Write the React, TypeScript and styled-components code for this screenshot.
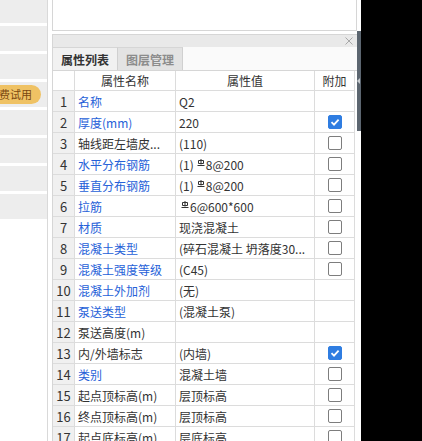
import * as React from 'react'
import styled, { createGlobalStyle } from 'styled-components'

const GlobalStyle = createGlobalStyle`
    html, body {
        margin: 0;
        padding: 0;
        background: #fff;
    }
    body {
        font-family: "Noto Sans CJK SC", "Noto Sans", sans-serif;
        font-size: 12px;
        color: #333;
    }
`

const RebarWrap = styled('span')<{ $indent?: boolean }>`
    display: inline-flex;
    align-self: flex-start;
    margin: 5px 1px 0 ${p => (p.$indent ? '2px' : '3px')};
`

const Mark = styled('svg')`
    display: block;
`

type Row = {
    name: string
    blue: boolean
    value: string
    rebar?: [string, string, boolean?]
    check: boolean | null
}

// 钢筋等级符号
const RebarMark = () => (
    <Mark width="8" height="7" viewBox="0 0 8 7">
        <path d="M4 0 V5.5 M1.5 1.5 H6.5 V4.5 H1.5 Z M0.5 6.5 H7.5" fill="none" stroke="#333" strokeWidth="1" />
    </Mark>
)

const rows: Row[] = [
    { name: '名称', blue: true, value: 'Q2', check: null },
    { name: '厚度(mm)', blue: true, value: '220', check: true },
    { name: '轴线距左墙皮...', blue: false, value: '(110)', check: false },
    { name: '水平分布钢筋', blue: true, value: '', rebar: ['(1)', '8@200'], check: false },
    { name: '垂直分布钢筋', blue: true, value: '', rebar: ['(1)', '8@200'], check: false },
    { name: '拉筋', blue: true, value: '', rebar: ['', '6@600*600', true], check: false },
    { name: '材质', blue: true, value: '现浇混凝土', check: false },
    { name: '混凝土类型', blue: true, value: '(碎石混凝土 坍落度30...', check: false },
    { name: '混凝土强度等级', blue: true, value: '(C45)', check: false },
    { name: '混凝土外加剂', blue: true, value: '(无)', check: null },
    { name: '泵送类型', blue: true, value: '(混凝土泵)', check: null },
    { name: '泵送高度(m)', blue: false, value: '', check: null },
    { name: '内/外墙标志', blue: false, value: '(内墙)', check: true },
    { name: '类别', blue: true, value: '混凝土墙', check: false },
    { name: '起点顶标高(m)', blue: false, value: '层顶标高', check: false },
    { name: '终点顶标高(m)', blue: false, value: '层顶标高', check: false },
    { name: '起点底标高(m)', blue: false, value: '层底标高', check: false },
]

const navBlocks = [0, 1, 2, 3, 4, 5, 6, 7]

export default function App() {
    return (
        <Page>
            <GlobalStyle />
            <LeftNav>
                {navBlocks.map(i => (
                    <NavBlock key={i}>
                        {i === 3 && <Badge>免费试用</Badge>}
                    </NavBlock>
                ))}
            </LeftNav>
            <Main>
                <TopPanel />
                <PropPanel>
                    <PanelHeader>
                        <svg width="8" height="8" viewBox="0 0 8 8">
                            <path d="M0.5 0.5 L7.5 7.5 M7.5 0.5 L0.5 7.5" stroke="#a8a8a8" strokeWidth="1" />
                        </svg>
                    </PanelHeader>
                    <TabBar>
                        <Tab $active>属性列表</Tab>
                        <Tab>图层管理</Tab>
                    </TabBar>
                    <Table>
                        <HeadCell />
                        <HeadCell>属性名称</HeadCell>
                        <HeadCell>属性值</HeadCell>
                        <HeadCell>附加</HeadCell>
                        {rows.map((r, i) => (
                            <React.Fragment key={i}>
                                <NumCell>{i + 1}</NumCell>
                                <NameCell $blue={r.blue}>{r.name}</NameCell>
                                <ValueCell>
                                    {r.rebar ? (
                                        <>
                                            {r.rebar[0]}
                                            <RebarWrap $indent={r.rebar[2]}><RebarMark /></RebarWrap>
                                            {r.rebar[1]}
                                        </>
                                    ) : r.value}
                                </ValueCell>
                                <AddCell>
                                    {r.check !== null && (
                                        <Check $checked={r.check}>
                                            {r.check && (
                                                <svg width="10" height="10" viewBox="0 0 10 10">
                                                    <path d="M1.5 5.2 L4 7.6 L8.6 2.6" fill="none" stroke="#fff" strokeWidth="1.8" />
                                                </svg>
                                            )}
                                        </Check>
                                    )}
                                </AddCell>
                            </React.Fragment>
                        ))}
                    </Table>
                </PropPanel>
            </Main>
            <ScrollColumn>
                <Thumb>
                    <Arrow />
                </Thumb>
            </ScrollColumn>
            <Backdrop />
        </Page>
    )
}

const Page = styled('div')`
    display: flex;
    width: 422px;
    height: 441px;
    overflow: hidden;
    background: #fff;
`

const LeftNav = styled('div')`
    width: 47px;
    flex: none;
    margin-right: 4px;
    border-right: 1px solid #d9d9d9;
    display: flex;
    flex-direction: column;
    gap: 3px;
    margin-top: -2px;
    overflow: hidden;
`

const NavBlock = styled('div')`
    height: 25px;
    flex: none;
    background: #ededed;
    display: flex;
    align-items: center;
`

const Badge = styled('div')`
    margin-left: -21px;
    height: 19px;
    line-height: 19px;
    padding: 0 9px 0 9px;
    border-radius: 10px;
    background: #efc264;
    color: #7a4710;
    font-size: 11px;
    white-space: nowrap;
`

const Main = styled('div')`
    width: 305px;
    flex: none;
    display: flex;
    flex-direction: column;
    gap: 3px;
`

const TopPanel = styled('div')`
    height: 30px;
    flex: none;
    border: 1px solid #d6d6d6;
    border-top: none;
    background: #fff;
`

const PropPanel = styled('div')`
    flex: 1;
    display: flex;
    flex-direction: column;
    border-left: 1px solid #d6d6d6;
    border-top: 1px solid #d6d6d6;
`

const PanelHeader = styled('div')`
    height: 12px;
    flex: none;
    background: #e9e9e9;
    display: flex;
    align-items: center;
    justify-content: flex-end;
    padding-right: 4px;
`

const TabBar = styled('div')`
    height: 23px;
    flex: none;
    display: flex;
    background: #fafafa;
    border-bottom: 1px solid #d6d6d6;
`

const Tab = styled('div')<{ $active?: boolean }>`
    width: 64px;
    border-right: 1px solid #d0d0d0;
    border-top: 1px solid #d6d6d6;
    background: ${p => (p.$active ? '#f1f1f1' : '#e3e3e3')};
    color: ${p => (p.$active ? '#333' : '#8c8c8c')};
    font-weight: bold;
    font-size: 12px;
    display: flex;
    align-items: center;
    justify-content: center;
`

const Table = styled('div')`
    display: grid;
    grid-template-columns: 22px 101px 139px 40px;
    grid-auto-rows: 21px;
    grid-template-rows: 20px;
    width: 302px;
`

const Cell = styled('div')`
    border-right: 1px solid #dcdcdc;
    border-bottom: 1px solid #dcdcdc;
    display: flex;
    align-items: center;
    white-space: nowrap;
    overflow: hidden;
    font-size: 12px;
`

const HeadCell = styled(Cell)`
    justify-content: center;
    background: #fff;
    color: #333;
`

const NumCell = styled(Cell)`
    justify-content: center;
    background: #f0f0f0;
    color: #333;
    font-size: 13px;
`

const NameCell = styled(Cell)<{ $blue: boolean }>`
    padding-left: 3px;
    color: ${p => (p.$blue ? '#2661d8' : '#333')};
`

const ValueCell = styled(Cell)`
    padding-left: 3px;
    color: #333;
`

const AddCell = styled(Cell)`
    justify-content: center;
`

const Check = styled('div')<{ $checked: boolean }>`
    width: 12px;
    height: 12px;
    border-radius: 2px;
    border: 1px solid ${p => (p.$checked ? '#2f7de1' : '#7d7d7d')};
    background: ${p => (p.$checked ? '#2f7de1' : '#fff')};
    display: flex;
    align-items: center;
    justify-content: center;
`

const ScrollColumn = styled('div')`
    width: 4px;
    flex: none;
    background: #fff;
    padding-top: 31px;
`

const Thumb = styled('div')`
    height: 100px;
    background: #5c6670;
    display: flex;
    align-items: center;
`

const Arrow = styled('div')`
    width: 0;
    height: 0;
    border-top: 3px solid transparent;
    border-bottom: 3px solid transparent;
    border-right: 3px solid #c8ccd0;
`

const Backdrop = styled('div')`
    flex: 1;
    background: #000;
`
